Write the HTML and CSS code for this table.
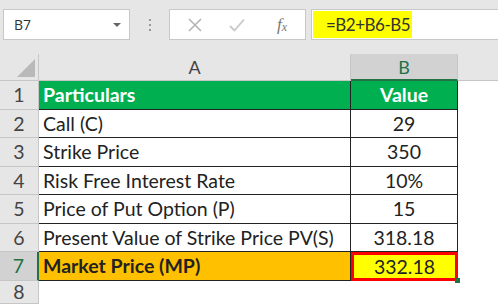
FILE: index.html
```html
<!DOCTYPE html>
<html lang="en">
<head>
    <meta charset="UTF-8">
    <title>Market Price</title>
    <link rel="stylesheet" href="styles.css">
</head>
<body>
    <!-- formula bar -->
    <div class="bar">
        <div class="namebox">
            <span>B7</span>
            <span class="caret"></span>
        </div>
        <div class="dots"><i></i><i></i><i></i></div>
        <div class="tools">
            <svg width="14" height="14" viewBox="0 0 14 14"><path d="M1 1L13 13M13 1L1 13" stroke="#b4b4b4" stroke-width="1.6" fill="none"/></svg>
            <svg width="16" height="14" viewBox="0 0 16 14"><path d="M1 8L5.5 12.5L15 1.5" stroke="#c8c8c8" stroke-width="1.8" fill="none"/></svg>
            <span class="fx">f<sub>x</sub></span>
        </div>
        <div class="formula"><span class="hl">=B2+B6-B5</span></div>
    </div>

    <!-- sheet -->
    <div class="sheet">
        <div class="corner"><span class="tri"></span></div>
        <div class="colhead">A</div>
        <div class="colhead active">B</div>
        <div class="colhead rest"></div>

        <div class="rowhead">1</div>
        <div class="cell green">Particulars</div>
        <div class="cell green num">Value</div>
        <div class="blank"></div>

        <div class="rowhead">2</div>
        <div class="cell">Call (C)</div>
        <div class="cell num">29</div>
        <div class="blank"></div>

        <div class="rowhead">3</div>
        <div class="cell">Strike Price</div>
        <div class="cell num">350</div>
        <div class="blank"></div>

        <div class="rowhead">4</div>
        <div class="cell">Risk Free Interest Rate</div>
        <div class="cell num">10%</div>
        <div class="blank"></div>

        <div class="rowhead">5</div>
        <div class="cell">Price of Put Option (P)</div>
        <div class="cell num">15</div>
        <div class="blank"></div>

        <div class="rowhead">6</div>
        <div class="cell">Present Value of Strike Price PV(S)</div>
        <div class="cell num">318.18</div>
        <div class="blank"></div>

        <div class="rowhead active">7</div>
        <div class="cell orange">Market Price (MP)</div>
        <div class="cell num selected">332.18<span class="handle"></span></div>
        <div class="blank"></div>

        <div class="rowhead last">8</div>
        <div class="cell empty"></div>
        <div class="cell empty"></div>
        <div class="blank"></div>
    </div>
</body>
</html>
```

FILE: styles.css
```css
* {
    box-sizing: border-box;
    margin: 0;
    padding: 0;
}
body {
    width: 498px;
    height: 304px;
    overflow: hidden;
    background: #fff;
    font-family: Lato, "Liberation Sans", sans-serif;
    color: #222;
}

/* formula bar */
.bar {
    height: 54px;
    background: #e6e6e6;
    display: flex;
    align-items: flex-start;
    padding: 9px 0 0 3px;
}
.namebox {
    width: 127px;
    height: 31px;
    background: #fff;
    border: 1px solid #c8c8c8;
    display: flex;
    align-items: center;
    justify-content: space-between;
    padding: 0 8px 0 10px;
    font-family: "Open Sans", sans-serif;
    font-size: 14px;
    color: #333;
}
.caret {
    width: 0;
    height: 0;
    border-left: 4px solid transparent;
    border-right: 4px solid transparent;
    border-top: 4px solid #666;
}
.dots {
    width: 39px;
    height: 31px;
    display: flex;
    flex-direction: column;
    align-items: center;
    justify-content: center;
    gap: 3px;
}
.dots i {
    width: 2px;
    height: 2px;
    background: #999;
}
.tools {
    width: 137px;
    height: 31px;
    background: #fff;
    border: 1px solid #c8c8c8;
    display: flex;
    align-items: center;
    padding-left: 18px;
    gap: 27px;
}
.fx {
    font-family: "Liberation Serif", serif;
    font-style: italic;
    font-size: 17px;
    color: #777;
    margin-left: 5px;
}
.fx sub {
    font-size: 12px;
    vertical-align: -1px;
}
.formula {
    flex: 1;
    height: 31px;
    margin-left: 5px;
    background: #fff;
    border: 1px solid #c8c8c8;
    border-right: none;
    padding: 1px 0 1px 1px;
}
.hl {
    display: inline-block;
    height: 100%;
    width: 99px;
    background: #ffff00;
    padding-left: 13px;
    font-size: 17px;
    letter-spacing: -0.5px;
    line-height: 28px;
    white-space: nowrap;
    overflow: hidden;
    color: #333;
}

/* sheet grid */
.sheet {
    display: grid;
    grid-template-columns: 39px 312px 107px 1fr;
    grid-template-rows: 27px 29px 28px 29px 28px 29px 28px 29px 1fr;
    height: 250px;
    font-size: 19.5px;
}
.corner {
    background: #e6e6e6;
    border-right: 1px solid #c6c6c6;
    border-bottom: 1px solid #c6c6c6;
    position: relative;
}
.tri {
    position: absolute;
    right: 3px;
    bottom: 3px;
    width: 0;
    height: 0;
    border-left: 18px solid transparent;
    border-bottom: 18px solid #b9b9b9;
}
.colhead {
    background: #e6e6e6;
    border-right: 1px solid #c6c6c6;
    border-bottom: 1px solid #c6c6c6;
    text-align: center;
    line-height: 26px;
    color: #444;
    font-size: 18px;
}
.colhead.active {
    background: #d2d2d2;
    color: #217346;
    border-bottom: 2px solid #217346;
}
.colhead.rest {
    border-right: none;
}
.rowhead {
    background: #e6e6e6;
    border-right: 1px solid #c6c6c6;
    border-bottom: 1px solid #c6c6c6;
    text-align: center;
    line-height: 28px;
    color: #444;
}
.rowhead.active {
    background: #d2d2d2;
    color: #217346;
    border-right: 2px solid #217346;
}
.rowhead.last {
    line-height: 22px;
}
.cell {
    border-right: 1px solid #222;
    border-bottom: 1px solid #222;
    padding-left: 4px;
    line-height: 28px;
    white-space: nowrap;
}
.cell.num {
    text-align: center;
    padding-left: 0;
}
.cell.empty {
    border: none;
}
.green {
    background: #00b050;
    color: #fff;
    font-weight: bold;
}
.orange {
    background: #ffc000;
    font-weight: bold;
}
.selected {
    background: #ffff00;
    border: 3px solid #ff0000;
    line-height: 23px;
    position: relative;
}
.handle {
    position: absolute;
    right: -5px;
    bottom: -5px;
    width: 5px;
    height: 5px;
    background: #217346;
}
.blank {
    background: #fff;
}
```
